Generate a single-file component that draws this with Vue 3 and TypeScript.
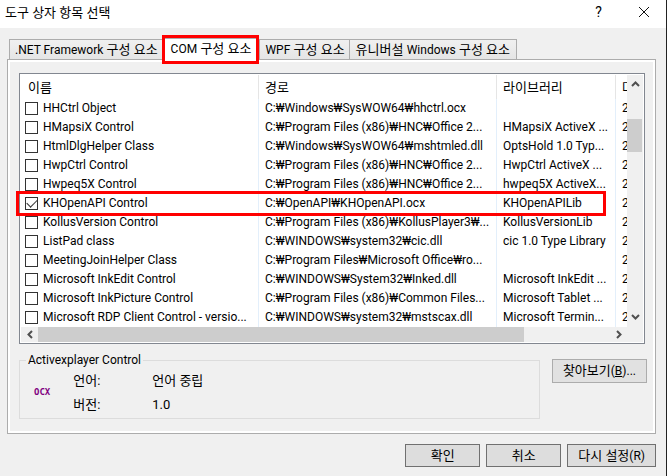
<script setup lang="ts">
import { ref } from 'vue'

interface Component {
  name: string
  path: string
  library: string
  modified: string
  checked: boolean
}

interface Tab {
  prefix: string
  label: string
  suffix: string
}

const tabs: Tab[] = [
  { prefix: '', label: '.NET Framework', suffix: ' 구성 요소' },
  { prefix: '', label: 'COM', suffix: ' 구성 요소' },
  { prefix: '', label: 'WPF', suffix: ' 구성 요소' },
  { prefix: '유니버설 ', label: 'Windows', suffix: ' 구성 요소' },
]
const activeTab = ref(1)

const row = (name: string, path: string, library: string, checked = false): Component => ({
  name,
  path,
  library,
  modified: '2',
  checked,
})

const components = ref<Component[]>([
  row('HHCtrl Object', 'C:₩Windows₩SysWOW64₩hhctrl.ocx', ''),
  row('HMapsiX Control', 'C:₩Program Files (x86)₩HNC₩Office 2...', 'HMapsiX ActiveX ...'),
  row('HtmlDlgHelper Class', 'C:₩Windows₩SysWOW64₩mshtmled.dll', 'OptsHold 1.0 Typ...'),
  row('HwpCtrl Control', 'C:₩Program Files (x86)₩HNC₩Office 2...', 'HwpCtrl ActiveX ...'),
  row('Hwpeq5X Control', 'C:₩Program Files (x86)₩HNC₩Office 2...', 'hwpeq5X ActiveX...'),
  row('KHOpenAPI Control', 'C:₩OpenAPI₩KHOpenAPI.ocx', 'KHOpenAPILib', true),
  row('KollusVersion Control', 'C:₩Program Files (x86)₩KollusPlayer3₩...', 'KollusVersionLib'),
  row('ListPad class', 'C:₩WINDOWS₩system32₩cic.dll', 'cic 1.0 Type Library'),
  row('MeetingJoinHelper Class', 'C:₩Program Files₩Microsoft Office₩ro...', ''),
  row('Microsoft InkEdit Control', 'C:₩WINDOWS₩System32₩Inked.dll', 'Microsoft InkEdit ...'),
  row('Microsoft InkPicture Control', 'C:₩Program Files (x86)₩Common Files...', 'Microsoft Tablet ...'),
  row('Microsoft RDP Client Control - versio...', 'C:₩WINDOWS₩system32₩mstscax.dll', 'Microsoft Termin...'),
])
</script>

<template>
  <main class="dialog">
    <header class="titlebar">
      <h1>도구 상자 항목 선택</h1>
      <button class="caption help" type="button">?</button>
      <button class="caption" type="button">
        <svg width="12" height="12" viewBox="0 0 12 12"><path d="M1 1 11 11M11 1 1 11" /></svg>
      </button>
    </header>

    <div class="body">
      <div class="tabs" role="tablist">
        <button
          v-for="(tab, i) in tabs"
          :key="tab.label"
          type="button"
          role="tab"
          class="tab"
          :class="{ active: i === activeTab }"
          :aria-selected="i === activeTab"
          @click="activeTab = i"
        >{{ tab.prefix }}<span class="latin">{{ tab.label }}</span>{{ tab.suffix }}<i v-if="i === 1" class="mark mark-tab"></i></button>
      </div>

      <section class="panel" role="tabpanel">
        <div class="list">
          <div class="view">
            <div class="clip">
              <table>
                <colgroup>
                  <col class="c-name" />
                  <col class="c-path" />
                  <col class="c-lib" />
                  <col />
                </colgroup>
                <thead>
                  <tr>
                    <th>이름</th>
                    <th>경로</th>
                    <th>라이브러리</th>
                    <th>마</th>
                  </tr>
                </thead>
                <tbody>
                  <tr v-for="(c, i) in components" :key="c.name">
                    <td>
                      <div class="name">
                        <input :id="`component-${i}`" v-model="c.checked" type="checkbox" />
                        <label :for="`component-${i}`">{{ c.name }}</label>
                      </div>
                    </td>
                    <td>{{ c.path }}</td>
                    <td>{{ c.library }}</td>
                    <td>{{ c.modified }}</td>
                  </tr>
                </tbody>
              </table>
            </div>
            <div class="vbar">
              <button type="button" class="arrow"><svg width="9" height="8" viewBox="0 0 9 8"><path d="M1 6 4.500 2.500 8 6" /></svg></button>
              <div class="vtrack"><div class="vthumb"></div></div>
              <button type="button" class="arrow"><svg width="9" height="8" viewBox="0 0 9 8"><path d="M1 2 4.500 5.500 8 2" /></svg></button>
            </div>
          </div>
          <div class="hbar">
            <button type="button" class="arrow"><svg width="8" height="9" viewBox="0 0 8 9"><path d="M6 1 2.500 4.500 6 8" /></svg></button>
            <div class="htrack"><div class="hthumb"></div></div>
            <button type="button" class="arrow"><svg width="8" height="9" viewBox="0 0 8 9"><path d="M2 1 5.500 4.500 2 8" /></svg></button>
            <div class="corner"></div>
          </div>
          <i class="mark mark-row"></i>
        </div>

        <div class="details">
          <fieldset>
            <legend>Activexplayer Control</legend>
            <span class="ocx">OCX</span>
            <dl>
              <dt>언어:</dt>
              <dd>언어 중립</dd>
              <dt>버전:</dt>
              <dd>1.0</dd>
            </dl>
          </fieldset>
          <button type="button" class="push browse">찾아보기<span class="latin">(<u>B</u>)...</span></button>
        </div>
      </section>

      <footer>
        <button type="button" class="push">확인</button>
        <button type="button" class="push">취소</button>
        <button type="button" class="push wide">다시 설정<span class="latin">(R)</span></button>
      </footer>
    </div>
  </main>
</template>

<style>
body {
  background: #f0f0f0;
}
</style>

<style scoped>
* {
  box-sizing: border-box;
}

.dialog {
  min-height: 100vh;
  display: flex;
  flex-direction: column;
  border-right: 1px solid #222;
  background: #f0f0f0;
  color: #000;
  font: 13px/19px Roboto, "Noto Sans CJK KR", sans-serif;
}

button {
  margin: 0;
  padding: 0;
  border: 0;
  border-radius: 0;
  background: none;
  color: inherit;
  font: inherit;
  white-space: nowrap;
}

.latin {
  font-size: 12px;
}

svg {
  display: block;
  fill: none;
  stroke: #505050;
  stroke-width: 2;
}

.titlebar {
  display: flex;
  align-items: center;
  height: 28px;
  padding: 0 0 4px 5px;
  background: #fff;
}

h1 {
  flex: 1;
  margin: 0;
  font-size: 13px;
  font-weight: 400;
}

.caption {
  display: flex;
  align-items: center;
  justify-content: center;
  width: 45px;
  height: 24px;
}

.caption svg {
  stroke: #111;
  stroke-width: 1;
}

.help {
  font-size: 14px;
}

.body {
  flex: 1;
  display: flex;
  flex-direction: column;
  padding: 10px 10px 9px 7px;
}

.tabs {
  display: flex;
  align-items: flex-end;
  padding-left: 2px;
}

.tab {
  height: 20px;
  padding: 0 4px 0 5px;
  border: 1px solid #acacac;
  border-bottom: 0;
  border-right: 0;
  background: linear-gradient(#f0f0f0, #e5e5e5);
  line-height: 18px;
}

.tab:last-child {
  padding: 0 6px;
  border-right: 1px solid #acacac;
}

.tab.active {
  position: relative;
  height: 22px;
  margin-bottom: -1px;
  padding: 0 8px 2px;
  background: #fff;
}

.mark {
  position: absolute;
  border: 3px solid #f00;
  pointer-events: none;
}

.mark-tab {
  inset: -4px 0 -4px -1px;
}

.panel {
  flex: 1;
  display: flex;
  flex-direction: column;
  gap: 7px;
  padding: 11px 8px 11px 9px;
  border: 1px solid #acacac;
  box-shadow: inset 0 0 0 2px #fff;
}

.list {
  position: relative;
  margin: 2px 2px 0;
  padding: 1px;
  border: 1px solid #828790;
  background: #fff;
}

.mark-row {
  top: 117px;
  left: -4px;
  right: 38px;
  height: 25px;
}

.view {
  display: flex;
}

.clip {
  flex: 1;
  min-width: 0;
  overflow: hidden;
}

table {
  width: 100%;
  table-layout: fixed;
  border-collapse: separate;
  border-spacing: 0;
}

.c-name,
.c-path {
  width: 238px;
}

.c-lib {
  width: 119px;
}

th,
td {
  height: 19px;
  padding: 0 0 0 6px;
  border-right: 1px solid #e3effb;
  font-size: 12px;
  line-height: 19px;
  text-align: left;
  white-space: nowrap;
  overflow: hidden;
}

th {
  height: 24px;
  border-color: #e5e5e5;
  font-size: 13px;
  font-weight: 400;
}

th:last-child,
td:last-child {
  border-right: 0;
}

td:first-child {
  padding-left: 4px;
}

th:first-child {
  padding-left: 7px;
}

.name {
  display: flex;
  align-items: center;
  gap: 5px;
}

input {
  appearance: none;
  flex: none;
  display: grid;
  place-items: center;
  width: 13px;
  height: 13px;
  margin: 0;
  border: 1px solid #333;
  background: #fff;
}

input:checked::before {
  content: "";
  width: 9px;
  height: 5px;
  margin-bottom: 3px;
  border: solid #333;
  border-width: 0 0 1px 1px;
  transform: rotate(-45deg);
}

.vbar {
  display: flex;
  flex-direction: column;
  width: 16px;
  padding-bottom: 2px;
  background: #f0f0f0;
}

.arrow {
  display: flex;
  align-items: center;
  justify-content: center;
  width: 17px;
  height: 17px;
}

.vtrack {
  flex: 1;
  padding-top: 27px;
}

.vthumb {
  width: 15px;
  height: 33px;
  background: #cdcdcd;
}

.hbar {
  display: flex;
  height: 15px;
  background: #f0f0f0;
}

.hbar .arrow {
  height: 15px;
}

.htrack {
  flex: 1;
}

.hthumb {
  width: 85%;
  height: 15px;
  background: #cdcdcd;
}

.corner {
  width: 16px;
}

.details {
  display: flex;
  align-items: flex-start;
  gap: 12px;
  padding-left: 2px;
}

fieldset {
  flex: 1;
  display: flex;
  align-items: center;
  gap: 23px;
  height: 68px;
  margin: 0;
  padding: 0 14px 4px;
  border: 1px solid #dcdcdc;
}

legend {
  margin-left: -8px;
  padding: 0 2px;
  font-size: 12px;
}

.ocx {
  color: #800080;
  font: bold 9px/12px "DejaVu Sans Mono", monospace;
}

dl {
  display: grid;
  grid-template-columns: 79px auto;
  row-gap: 5px;
  margin: 0;
}

dt,
dd {
  margin: 0;
}

.push {
  min-width: 75px;
  height: 23px;
  padding: 0 10px;
  border: 1px solid #707070;
  background: #ddd;
  line-height: 20px;
}

.browse {
  height: 24px;
  margin-top: 8px;
  border-color: #acacac;
  background: #e1e1e1;
}

footer {
  display: flex;
  justify-content: flex-end;
  gap: 6px;
  padding-top: 10px;
}
</style>
